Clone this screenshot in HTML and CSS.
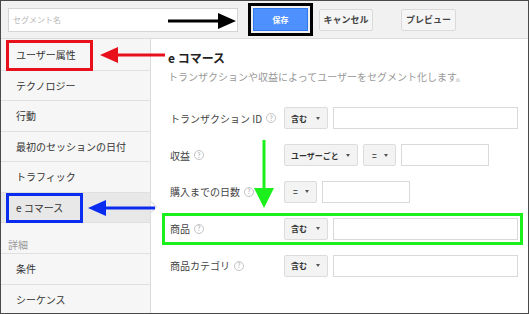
FILE: index.html
```html
<!DOCTYPE html>
<html lang="ja">
<head>
    <meta charset="UTF-8">
    <meta name="viewport" content="width=device-width, initial-scale=1.0">
    <title>セグメント エディタ</title>
    <link rel="stylesheet" href="styles.css">
</head>
<body>
<div class="frame">

    <header class="toolbar">
        <input class="segment-name" type="text" placeholder="セグメント名">
        <button class="btn btn-save">保存</button>
        <button class="btn btn-cancel">キャンセル</button>
        <button class="btn btn-preview">プレビュー</button>
    </header>

    <div class="editor">
        <nav class="sidebar">
            <div class="nav-item">ユーザー属性</div>
            <div class="nav-item">テクノロジー</div>
            <div class="nav-item">行動</div>
            <div class="nav-item">最初のセッションの日付</div>
            <div class="nav-item">トラフィック</div>
            <div class="nav-item selected">e コマース</div>
            <div class="nav-heading">詳細</div>
            <div class="nav-item">条件</div>
            <div class="nav-item">シーケンス</div>
        </nav>

        <main class="content">
            <h1>e コマース</h1>
            <p class="lead">トランザクションや収益によってユーザーをセグメント化します。</p>

            <div class="rows">
                <div class="row">
                    <div class="label">トランザクション&nbsp;ID<span class="help">?</span></div>
                    <div class="select sel-contains">含む<i class="caret"></i></div>
                    <div class="field field-wide"></div>
                </div>
                <div class="row">
                    <div class="label">収益<span class="help">?</span></div>
                    <div class="select sel-per-user">ユーザーごと<i class="caret"></i></div>
                    <div class="select sel-eq">=<i class="caret"></i></div>
                    <div class="field field-short"></div>
                </div>
                <div class="row">
                    <div class="label">購入までの日数<span class="help">?</span></div>
                    <div class="select sel-eq">=<i class="caret"></i></div>
                    <div class="field field-short"></div>
                </div>
                <div class="row">
                    <div class="label">商品<span class="help">?</span></div>
                    <div class="select sel-contains">含む<i class="caret"></i></div>
                    <div class="field field-wide"></div>
                </div>
                <div class="row">
                    <div class="label">商品カテゴリ<span class="help">?</span></div>
                    <div class="select sel-contains">含む<i class="caret"></i></div>
                    <div class="field field-wide"></div>
                </div>
            </div>
        </main>
    </div>

    <!-- annotation marks drawn over the screenshot -->
    <svg class="annotations" width="529" height="314" viewBox="0 0 529 314">
        <line x1="168" y1="21" x2="219" y2="21" stroke="#000" stroke-width="3"/>
        <polygon points="236,21 218,13 218,29" fill="#000"/>

        <rect x="7.5" y="41.5" width="84" height="28" fill="none" stroke="#e8101a" stroke-width="3"/>
        <line x1="117" y1="55" x2="165" y2="55" stroke="#e8101a" stroke-width="3"/>
        <polygon points="100,55 118,47 118,63" fill="#e8101a"/>

        <rect x="7.5" y="194.5" width="74" height="27" fill="none" stroke="#0a2cf0" stroke-width="3"/>
        <line x1="105" y1="208" x2="155" y2="208" stroke="#0a2cf0" stroke-width="3"/>
        <polygon points="88,208 106,200 106,216" fill="#0a2cf0"/>

        <line x1="264" y1="140" x2="264" y2="190" stroke="#1cf01c" stroke-width="3"/>
        <polygon points="264,208 254,188 274,188" fill="#1cf01c"/>
        <rect x="163.5" y="214.5" width="358" height="29" fill="none" stroke="#1cf01c" stroke-width="3"/>
    </svg>

</div>
</body>
</html>
```

FILE: styles.css
```css
body {
    margin: 0;
    font-family: "Noto Sans CJK JP", "Liberation Sans", sans-serif;
    background-color: #fff;
}
.frame {
    position: relative;
    width: 529px;
    height: 314px;
    box-sizing: border-box;
    border: 1px solid #4a4a4a;
    overflow: hidden;
    background-color: #fff;
}

/* top bar */
.toolbar {
    display: flex;
    align-items: center;
    height: 38px;
    box-sizing: border-box;
    padding-left: 7px;
    background-color: #f1f1f1;
    border-bottom: 1px solid #dcdcdc;
}
.segment-name {
    width: 230px;
    height: 24px;
    box-sizing: border-box;
    margin: 0;
    padding: 0 4px;
    border: 1px solid #d4d4d4;
    background-color: #fff;
    font-family: inherit;
    font-size: 8px;
    outline: none;
}
.segment-name::placeholder {
    color: #b8b8b8;
}
.btn {
    height: 22px;
    box-sizing: border-box;
    margin: 0;
    padding: 0;
    border: 1px solid #dadada;
    border-radius: 2px;
    background-color: #f5f5f5;
    color: #444;
    font-family: inherit;
    font-size: 9px;
    font-weight: bold;
    cursor: pointer;
}
.btn-save {
    width: 55px;
    height: 23px;
    margin-left: 15px;
    border-color: #3079ed;
    border-radius: 0;
    background-color: #4d90fe;
    color: #fff;
    font-size: 8px;
    outline: 3px solid #000;
    outline-offset: 2px;
}
.btn-cancel {
    width: 54px;
    margin-left: 11px;
}
.btn-preview {
    width: 55px;
    margin-left: 28px;
}

/* left menu */
.editor {
    display: flex;
    height: 274px;
}
.sidebar {
    width: 150px;
    box-sizing: border-box;
    padding-top: 1px;
    background-color: #f6f6f6;
    border-right: 1px solid #dcdcdc;
}
.nav-item {
    position: relative;
    display: flex;
    align-items: center;
    height: 30.5px;
    box-sizing: border-box;
    padding-left: 15px;
    border-bottom: 1px solid #e0e0e0;
    font-size: 10px;
    color: #333;
}
.nav-item.selected {
    background-color: #e8e8e8;
}
.nav-item.selected::before,
.nav-item.selected::after {
    content: "";
    position: absolute;
    top: 50%;
    width: 0;
    height: 0;
    border-style: solid;
    border-color: transparent;
}
.nav-item.selected::before {
    right: -7px;
    margin-top: -6px;
    border-width: 6px 0 6px 6px;
    border-left-color: #cfcfcf;
}
.nav-item.selected::after {
    right: -6px;
    margin-top: -5px;
    border-width: 5px 0 5px 5px;
    border-left-color: #fff;
}
.nav-heading {
    height: 31px;
    box-sizing: border-box;
    padding: 15px 0 0 7px;
    border-bottom: 1px solid #e0e0e0;
    font-size: 10px;
    line-height: 14px;
    color: #999;
}

/* right pane */
.content {
    flex: 1;
    padding: 12px 0 0 17px;
}
.content h1 {
    margin: 0;
    font-size: 12px;
    line-height: 14px;
    font-weight: bold;
    color: #222;
}
.lead {
    margin: 5px 0 0;
    font-size: 10px;
    line-height: 14px;
    color: #999;
}
.rows {
    margin-top: 16px;
    padding-left: 2px;
}
.row {
    display: flex;
    align-items: center;
    height: 36.8px;
}
.label {
    display: flex;
    align-items: center;
    width: 114px;
    font-size: 10px;
    color: #444;
}
.help {
    display: inline-flex;
    align-items: center;
    justify-content: center;
    width: 10px;
    height: 10px;
    box-sizing: border-box;
    margin-left: 4px;
    border: 1px solid #c4c4c4;
    border-radius: 50%;
    font-size: 7px;
    line-height: 1;
    color: #aaa;
}
.select {
    display: flex;
    align-items: center;
    justify-content: space-between;
    height: 22px;
    box-sizing: border-box;
    padding: 0 7px 0 6px;
    margin-right: 5px;
    border: 1px solid #dcdcdc;
    border-radius: 2px;
    background-color: #f3f3f3;
    font-size: 8px;
    font-weight: bold;
    color: #333;
}
.caret {
    width: 0;
    height: 0;
    border-left: 2.5px solid transparent;
    border-right: 2.5px solid transparent;
    border-top: 3px solid #555;
}
.sel-contains {
    width: 44px;
}
.sel-per-user {
    width: 74px;
}
.sel-eq {
    width: 33px;
    padding-left: 8px;
}
.field {
    height: 22px;
    box-sizing: border-box;
    border: 1px solid #d9d9d9;
    background-color: #fff;
}
.field-wide {
    width: 185px;
}
.field-short {
    width: 88px;
}

.annotations {
    position: absolute;
    top: -1px;
    left: -1px;
    pointer-events: none;
}
```
